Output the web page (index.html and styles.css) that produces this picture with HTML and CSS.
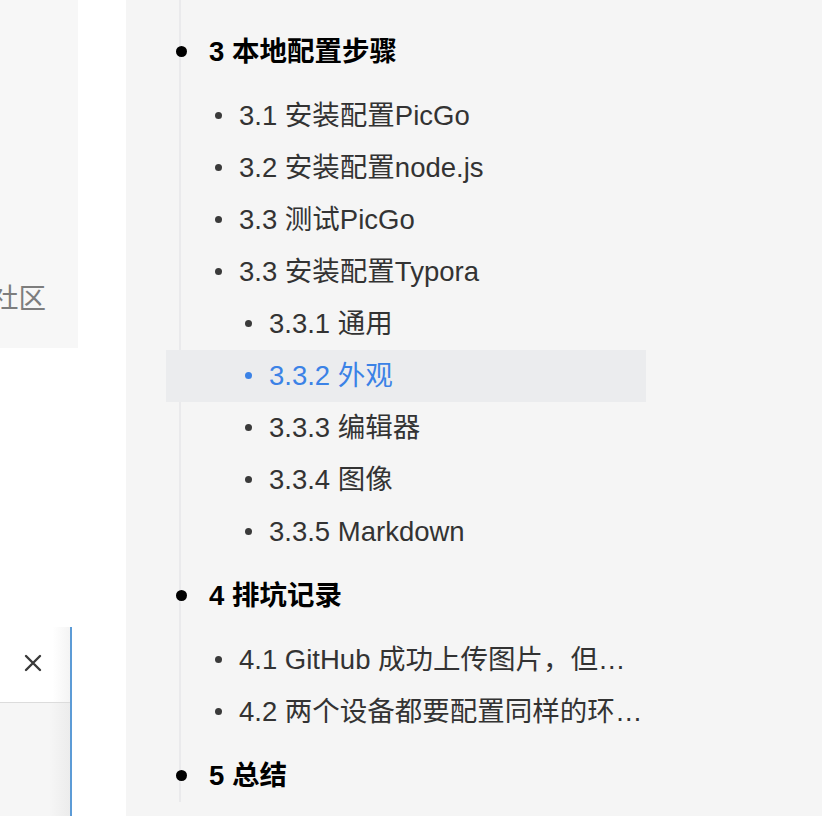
FILE: index.html
```html
<!DOCTYPE html>
<html lang="zh-CN">
<head>
<meta charset="utf-8">
<title>Outline</title>
<link rel="stylesheet" href="styles.css">
</head>
<body>
<div class="app">
  <div class="main">
    <div class="card"><span class="card-text">社区</span></div>
    <div class="dialog">
      <div class="dialog-head">
        <svg class="close" width="20" height="20" viewBox="0 0 20 20" aria-hidden="true">
          <path d="M3 3 L17 17 M17 3 L3 17" stroke="#3a3a3a" stroke-width="2.4" stroke-linecap="round" fill="none"/>
        </svg>
      </div>
      <div class="dialog-body"></div>
    </div>
  </div>
  <aside class="outline">
    <div class="outline-list">
      <div class="row l2"><span class="b"></span>2.4 生成令牌</div>
      <div class="row l1"><span class="b"></span>3 本地配置步骤</div>
      <div class="row l2"><span class="b"></span>3.1 安装配置PicGo</div>
      <div class="row l2"><span class="b"></span>3.2 安装配置node.js</div>
      <div class="row l2"><span class="b"></span>3.3 测试PicGo</div>
      <div class="row l2"><span class="b"></span>3.3 安装配置Typora</div>
      <div class="row l3"><span class="b"></span>3.3.1 通用</div>
      <div class="row l3 active"><span class="b"></span>3.3.2 外观</div>
      <div class="row l3"><span class="b"></span>3.3.3 编辑器</div>
      <div class="row l3"><span class="b"></span>3.3.4 图像</div>
      <div class="row l3"><span class="b"></span>3.3.5 Markdown</div>
      <div class="row l1"><span class="b"></span>4 排坑记录</div>
      <div class="row l2"><span class="b"></span>4.1 GitHub 成功上传图片，但图床链接无法显示</div>
      <div class="row l2"><span class="b"></span>4.2 两个设备都要配置同样的环境吗</div>
      <div class="row l1"><span class="b"></span>5 总结</div>
    </div>
  </aside>
</div>
</body>
</html>
```

FILE: styles.css
```css
html, body {
  margin: 0;
  padding: 0;
  height: 100%;
  overflow: hidden;
  background: #ffffff;
}

.app {
  display: flex;
  height: 816px;
  font-family: "Liberation Sans", "Noto Sans CJK SC", sans-serif;
}

/* left (document) area */
.main {
  width: 126px;
  flex: 0 0 126px;
  background: #ffffff;
  display: flex;
  flex-direction: column;
  overflow: hidden;
}

.card {
  box-sizing: border-box;
  width: 78px;
  height: 348px;
  flex: 0 0 348px;
  background: #f7f7f7;
  display: flex;
  justify-content: flex-end;
  align-items: flex-start;
  padding-top: 285px;
  padding-right: 32px;
  overflow: hidden;
}

.card-text {
  font-size: 27.5px;
  line-height: 28px;
  color: #7d7d7d;
  white-space: nowrap;
}

.dialog {
  margin-top: 279px;
  width: 70px;
  flex: 1;
  border-right: 2px solid #5c9bd6;
  display: flex;
  flex-direction: column;
}

.dialog-head {
  box-sizing: border-box;
  height: 76px;
  flex: 0 0 76px;
  background: linear-gradient(to right, #ffffff 75%, #f4f4f4 100%);
  border-bottom: 1px solid #dcdcdc;
  padding-top: 26px;
  padding-left: 23px;
}

.close {
  display: block;
}

.dialog-body {
  flex: 1;
  background: linear-gradient(to right, #f6f6f6 70%, #ececec 100%);
}

/* outline sidebar */
.outline {
  flex: 1;
  background: #f5f5f5;
  overflow: hidden;
}

.outline-list {
  margin-top: -38px;
  margin-left: 53px;
  border-left: 2px solid #eaeaec;
}

.row {
  box-sizing: border-box;
  width: 480px;
  height: 52px;
  margin-left: -15px;
  line-height: 52px;
  font-size: 27.5px;
  color: #333333;
  white-space: nowrap;
  overflow: hidden;
  text-overflow: ellipsis;
}

.b {
  display: inline-block;
  border-radius: 50%;
  vertical-align: middle;
}

.l1 {
  margin-top: 12px;
  margin-bottom: 12px;
  padding-left: 10px;
  font-weight: bold;
  color: #000000;
}

.l1 .b {
  width: 11px;
  height: 11px;
  background: #000000;
  margin-right: 22px;
  position: relative;
  top: -2px;
}

.l2 {
  padding-left: 49px;
}

.l3 {
  padding-left: 79px;
}

.l2 .b,
.l3 .b {
  width: 7px;
  height: 7px;
  background: #3a3a3a;
  margin-right: 17px;
  position: relative;
  top: -2px;
}

.active {
  background: #ebecee;
  color: #3b82e6;
}

.active .b {
  background: #3b82e6;
}
```
